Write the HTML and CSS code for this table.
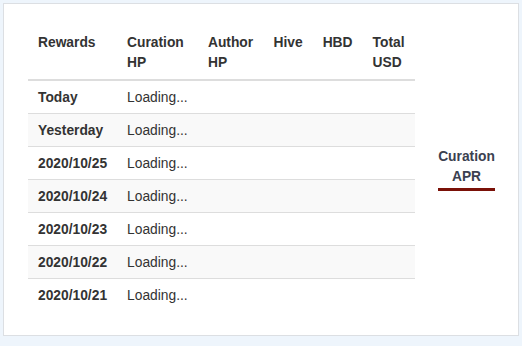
FILE: index.html
```html
<!DOCTYPE html>
<html>
<head>
<meta charset="utf-8">
<link rel="stylesheet" href="styles.css">
</head>
<body>
<div class="card">
  <div class="table-col">
    <table class="rewards">
      <thead>
        <tr>
          <th>Rewards</th>
          <th>Curation HP</th>
          <th>Author HP</th>
          <th>Hive</th>
          <th>HBD</th>
          <th>Total USD</th>
        </tr>
      </thead>
      <tbody>
        <tr><th>Today</th><td>Loading...</td><td></td><td></td><td></td><td></td></tr>
        <tr><th>Yesterday</th><td>Loading...</td><td></td><td></td><td></td><td></td></tr>
        <tr><th>2020/10/25</th><td>Loading...</td><td></td><td></td><td></td><td></td></tr>
        <tr><th>2020/10/24</th><td>Loading...</td><td></td><td></td><td></td><td></td></tr>
        <tr><th>2020/10/23</th><td>Loading...</td><td></td><td></td><td></td><td></td></tr>
        <tr><th>2020/10/22</th><td>Loading...</td><td></td><td></td><td></td><td></td></tr>
        <tr><th>2020/10/21</th><td>Loading...</td><td></td><td></td><td></td><td></td></tr>
      </tbody>
    </table>
  </div>
  <div class="apr-col">
    <div class="apr">Curation<br>APR</div>
  </div>
</div>
</body>
</html>
```
FILE: styles.css
```css
html, body {
  margin: 0;
  padding: 0;
}
body {
  background: #eef5fc;
  padding: 3px;
  font-family: "Liberation Sans", Arial, sans-serif;
  font-size: 13.8px;
  line-height: 20px;
  color: #333;
}
.card {
  background: #fff;
  border: 1px solid #dcdfe3;
  height: 333px;
  box-sizing: border-box;
  padding: 23px 0 23px 24px;
  display: flex;
  align-items: stretch;
}
.table-col {
  width: 387px;
  flex: none;
}
.rewards {
  width: 100%;
  border-collapse: collapse;
  border-spacing: 0;
}
.rewards th,
.rewards td {
  padding: 6px 10px;
  text-align: left;
  vertical-align: top;
}
.rewards tbody th,
.rewards tbody td {
  padding: 7px 10px 5px;
}
.rewards th {
  font-weight: bold;
}
.rewards thead th {
  border-bottom: 2px solid #ddd;
}
.rewards td {
  font-weight: normal;
}
.rewards tbody tr + tr th,
.rewards tbody tr + tr td {
  border-top: 1px solid #ddd;
}
.rewards tbody tr:nth-child(even) {
  background: #f9f9f9;
}
.apr-col {
  flex: 1;
  display: flex;
  justify-content: center;
  align-items: center;
  padding-bottom: 2px;
}
.apr {
  font-weight: bold;
  text-align: center;
  color: #3b4150;
  border-bottom: 3px solid #7a1108;
  padding-bottom: 1px;
}
```
